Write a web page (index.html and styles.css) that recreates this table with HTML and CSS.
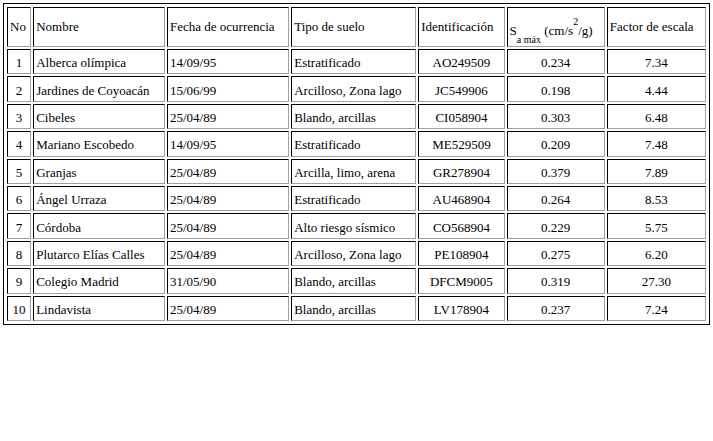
FILE: index.html
```html
<!DOCTYPE html>
<html lang="es">
<head>
<meta charset="utf-8">
<link rel="stylesheet" href="styles.css">
</head>
<body>
<table class="grid">
<tr class="head">
<td>No</td><td>Nombre</td><td>Fecha de ocurrencia</td><td>Tipo de suelo</td><td>Identificación</td><td class="unit">S<sub>a máx</sub> (cm/s<sup>2</sup>/g)</td><td>Factor de escala</td>
</tr>
<tr><td class="c">1</td><td>Alberca olímpica</td><td>14/09/95</td><td>Estratificado</td><td class="c">AO249509</td><td class="c">0.234</td><td class="c">7.34</td></tr>
<tr><td class="c">2</td><td>Jardines de Coyoacán</td><td>15/06/99</td><td>Arcilloso, Zona lago</td><td class="c">JC549906</td><td class="c">0.198</td><td class="c">4.44</td></tr>
<tr><td class="c">3</td><td>Cibeles</td><td>25/04/89</td><td>Blando, arcillas</td><td class="c">CI058904</td><td class="c">0.303</td><td class="c">6.48</td></tr>
<tr><td class="c">4</td><td>Mariano Escobedo</td><td>14/09/95</td><td>Estratificado</td><td class="c">ME529509</td><td class="c">0.209</td><td class="c">7.48</td></tr>
<tr><td class="c">5</td><td>Granjas</td><td>25/04/89</td><td>Arcilla, limo, arena</td><td class="c">GR278904</td><td class="c">0.379</td><td class="c">7.89</td></tr>
<tr><td class="c">6</td><td>Ángel Urraza</td><td>25/04/89</td><td>Estratificado</td><td class="c">AU468904</td><td class="c">0.264</td><td class="c">8.53</td></tr>
<tr><td class="c">7</td><td>Córdoba</td><td>25/04/89</td><td>Alto riesgo sísmico</td><td class="c">CO568904</td><td class="c">0.229</td><td class="c">5.75</td></tr>
<tr><td class="c">8</td><td>Plutarco Elías Calles</td><td>25/04/89</td><td>Arcilloso, Zona lago</td><td class="c">PE108904</td><td class="c">0.275</td><td class="c">6.20</td></tr>
<tr><td class="c">9</td><td>Colegio Madrid</td><td>31/05/90</td><td>Blando, arcillas</td><td class="c">DFCM9005</td><td class="c">0.319</td><td class="c">27.30</td></tr>
<tr><td class="c">10</td><td>Lindavista</td><td>25/04/89</td><td>Blando, arcillas</td><td class="c">LV178904</td><td class="c">0.237</td><td class="c">7.24</td></tr>
</table>
</body>
</html>
```

FILE: styles.css
```css
body {
  margin: 3px;
  background: #fff;
  color: #000;
  font-family: "Liberation Serif", "Times New Roman", serif;
  font-size: 13px;
}
.grid {
  width: 100%;
  border: 1px solid #000;
  padding: 1px;
  border-collapse: separate;
  border-spacing: 2px;
}
.grid td {
  border-top: 1px solid #000;
  border-left: 1px solid #000;
  border-right: 1px solid #a0a0a0;
  border-bottom: 1px solid #a0a0a0;
  padding: 5px 2px 3px;
  line-height: 15px;
  vertical-align: middle;
  text-align: left;
  white-space: nowrap;
}
.grid td.c {
  text-align: center;
}
.grid tr {
  height: 25.4px;
}
.grid tr.head {
  height: 40px;
}
.grid tr.head td {
  padding-top: 3px;
  padding-bottom: 5px;
}
.grid tr.head td.unit {
  vertical-align: top;
  padding-top: 14px;
  padding-bottom: 3px;
}
sub {
  font-size: 10px;
  line-height: 0;
  vertical-align: -8px;
}
sup {
  font-size: 10px;
  line-height: 0;
  vertical-align: 10px;
}
```
